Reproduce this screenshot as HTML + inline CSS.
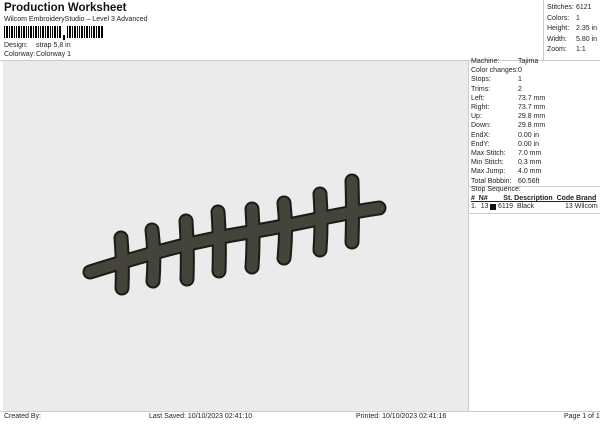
<!DOCTYPE html>
<html><head><style>
body{margin:0;width:600px;height:424px;background:#fff;font-family:"Liberation Sans",sans-serif;color:#222;position:relative;overflow:hidden;font-size:7px}
.a{position:absolute;white-space:nowrap}
</style></head><body>
<div class="a" style="left:4px;top:2px;font-size:11.5px;font-weight:bold;color:#111">Production Worksheet</div>
<div class="a" style="left:4px;top:16px">Wilcom EmbroideryStudio – Level 3 Advanced</div>
<svg class="a" style="left:4px;top:26px" width="100" height="14">
<g fill="#000">
<rect x="0" y="0" width="1" height="12"/><rect x="2" y="0" width="2" height="12"/><rect x="5" y="0" width="1" height="12"/><rect x="7" y="0" width="2" height="12"/><rect x="10" y="0" width="1" height="12"/><rect x="12" y="0" width="1" height="12"/><rect x="14" y="0" width="2" height="12"/><rect x="17" y="0" width="1" height="12"/><rect x="19" y="0" width="2" height="12"/><rect x="22" y="0" width="1" height="12"/><rect x="24" y="0" width="1" height="12"/><rect x="26" y="0" width="2" height="12"/><rect x="29" y="0" width="1" height="12"/><rect x="31" y="0" width="2" height="12"/><rect x="34" y="0" width="1" height="12"/><rect x="36" y="0" width="1" height="12"/><rect x="38" y="0" width="2" height="12"/><rect x="41" y="0" width="1" height="12"/><rect x="43" y="0" width="2" height="12"/><rect x="46" y="0" width="1" height="12"/><rect x="48" y="0" width="1" height="12"/><rect x="50" y="0" width="2" height="12"/><rect x="53" y="0" width="1" height="12"/><rect x="55" y="0" width="2" height="12"/>
<rect x="59" y="9" width="2" height="5"/>
<rect x="63" y="0" width="1" height="12"/><rect x="65" y="0" width="2" height="12"/><rect x="68" y="0" width="1" height="12"/><rect x="70" y="0" width="2" height="12"/><rect x="73" y="0" width="1" height="12"/><rect x="75" y="0" width="1" height="12"/><rect x="77" y="0" width="2" height="12"/><rect x="80" y="0" width="1" height="12"/><rect x="82" y="0" width="2" height="12"/><rect x="85" y="0" width="1" height="12"/><rect x="87" y="0" width="1" height="12"/><rect x="89" y="0" width="2" height="12"/><rect x="92" y="0" width="1" height="12"/><rect x="94" y="0" width="2" height="12"/><rect x="97" y="0" width="2" height="12"/>
</g></svg>
<div class="a" style="left:4px;top:42px">Design:</div><div class="a" style="left:36px;top:42px">strap 5,8 in</div>
<div class="a" style="left:4px;top:51px">Colorway:</div><div class="a" style="left:36px;top:51px">Colorway 1</div>
<div class="a" style="left:0;top:60px;width:600px;border-top:1px solid #ccc"></div>
<div class="a" style="left:543px;top:0;width:0;height:60px;border-left:1px solid #ccc"></div>
<div class="a" style="left:547px;top:3px;line-height:10.5px">Stitches:<br>Colors:<br>Height:<br>Width:<br>Zoom:</div>
<div class="a" style="left:576px;top:3px;line-height:10.5px">6121<br>1<br>2.35 in<br>5.80 in<br>1:1</div>
<div class="a" style="left:3px;top:61px;width:465px;height:350px;background:#ebebeb"></div>
<div class="a" style="left:468px;top:61px;width:0;height:350px;border-left:1px solid #ccc"></div>
<div class="a" style="left:471px;top:57px;line-height:9.2px">Machine:<br>Color changes:<br>Stops:<br>Trims:<br>Left:<br>Right:<br>Up:<br>Down:<br>EndX:<br>EndY:<br>Max Stitch:<br>Min Stitch:<br>Max Jump:<br>Total Bobbin:</div>
<div class="a" style="left:518px;top:57px;line-height:9.2px">Tajima<br>0<br>1<br>2<br>73.7 mm<br>73.7 mm<br>29.8 mm<br>29.8 mm<br>0.00 in<br>0.00 in<br>7.0 mm<br>0.3 mm<br>4.0 mm<br>60.56ft</div>
<div class="a" style="left:469px;top:186px;width:131px;border-top:1px solid #ccc"></div>
<div class="a" style="left:471px;top:186px">Stop Sequence:</div>
<div class="a" style="left:471px;top:195px;font-weight:bold;text-decoration:underline">#&nbsp;&nbsp;N#&nbsp;&nbsp;&nbsp;&nbsp;&nbsp;&nbsp;&nbsp;&nbsp;St.&nbsp;Description&nbsp;&nbsp;Code&nbsp;Brand</div>
<div class="a" style="left:471px;top:203px">1.&nbsp;&nbsp;13</div>
<div class="a" style="left:490px;top:204px;width:6px;height:6px;background:#111"></div>
<div class="a" style="left:498px;top:203px">6119&nbsp;&nbsp;Black</div>
<div class="a" style="left:565px;top:203px">13&nbsp;Wilcom</div>
<div class="a" style="left:469px;top:213px;width:131px;border-top:1px solid #ccc"></div>
<svg class="a" style="left:0;top:0" width="600" height="424">
<g stroke-linecap="round" fill="none">
<g stroke="#1c1b16" stroke-width="15">
<path d="M121 238Q123 262 122 288M152 230Q155 255 153 281M186 221Q188 250 187 279M218 212Q220 240 219 271M252 209Q254 238 252 267M284 203Q287 230 284 258M320 194Q322 222 320 250M352 181Q353 212 352 242"/>
<path d="M90 272C160 250 200 240 250 232S330 215 379 208"/>
</g>
<g stroke="#45443a" stroke-width="11">
<path d="M121 238Q123 262 122 288M152 230Q155 255 153 281M186 221Q188 250 187 279M218 212Q220 240 219 271M252 209Q254 238 252 267M284 203Q287 230 284 258M320 194Q322 222 320 250M352 181Q353 212 352 242"/>
<path d="M90 272C160 250 200 240 250 232S330 215 379 208"/>
</g>
</g></svg>
<div class="a" style="left:0;top:411px;width:600px;border-top:1px solid #ccc"></div>
<div class="a" style="left:4px;top:413px">Created By:</div>
<div class="a" style="left:149px;top:413px">Last Saved: 10/10/2023 02:41:10</div>
<div class="a" style="left:356px;top:413px">Printed: 10/10/2023 02:41:16</div>
<div class="a" style="left:564px;top:413px">Page 1 of 1</div>
</body></html>
